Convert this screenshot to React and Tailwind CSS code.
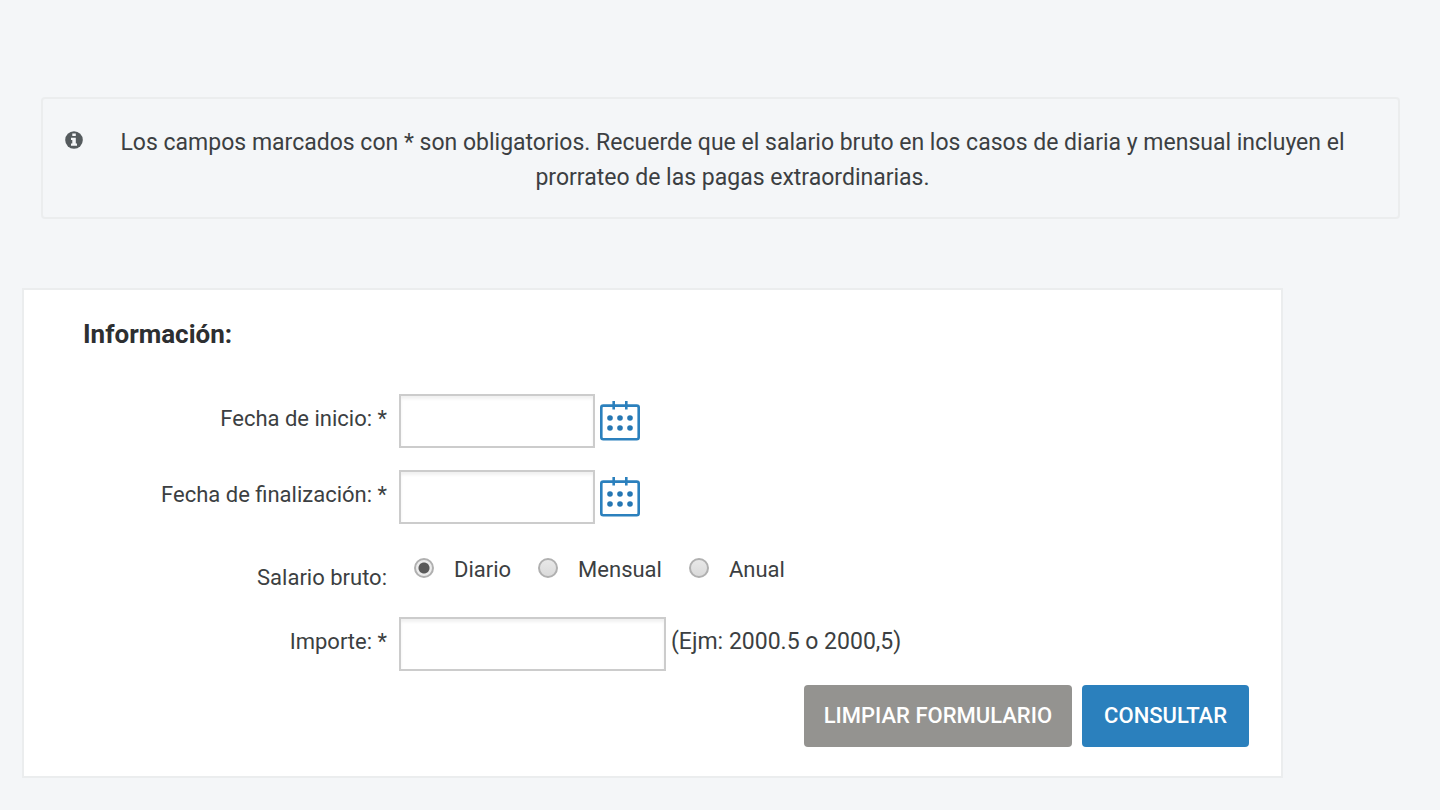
import React, { useState } from 'react';

const SALARY_TYPES = [
  { value: 'diario', label: 'Diario' },
  { value: 'mensual', label: 'Mensual' },
  { value: 'anual', label: 'Anual' },
];

const inputClass =
  'h-[54px] border-2 border-[#cccccc] bg-white px-3 shadow-[inset_0_3px_3px_rgba(0,0,0,0.06)] outline-none focus:border-[#2b80bd]';

function InfoIcon() {
  return (
    <svg className="mt-[6px] h-[18px] w-[18px] shrink-0" viewBox="0 0 18 18" aria-hidden="true">
      <circle cx="9" cy="9" r="8.8" fill="#555b5e" />
      <path d="M7.3 2.5h3.5v2.6H7.3zM6 6.8h4.8v5.7H12v2.2H6v-2.2h1.3V9H6z" fill="#f4f6f8" />
    </svg>
  );
}

function CalendarIcon() {
  return (
    <svg className="h-10 w-10" viewBox="0 0 40 40" fill="none" aria-hidden="true">
      <rect x="1.3" y="4.6" width="37.4" height="33.7" rx="2" stroke="#2b80bd" strokeWidth="2.6" />
      <path d="M13.7 0v8.5M26.3 0v8.5" stroke="#2b80bd" strokeWidth="2.6" />
      <g fill="#2577b3">
        <circle cx="10" cy="17" r="2.8" />
        <circle cx="20" cy="17" r="2.8" />
        <circle cx="30" cy="17" r="2.8" />
        <circle cx="10" cy="27" r="2.8" />
        <circle cx="20" cy="27" r="2.8" />
        <circle cx="30" cy="27" r="2.8" />
      </g>
    </svg>
  );
}

function DateField({ id, label, value, onChange }) {
  return (
    <div className="flex items-center gap-3">
      <label htmlFor={id} className="w-[363px] pb-1 text-right">
        {label}
      </label>
      <div className="flex items-center gap-[5px]">
        <input
          id={id}
          type="text"
          value={value}
          onChange={(e) => onChange(e.target.value)}
          className={`w-[196px] ${inputClass}`}
        />
        <button type="button" aria-label={`Abrir calendario, ${label}`} className="cursor-pointer">
          <CalendarIcon />
        </button>
      </div>
    </div>
  );
}

export default function App() {
  const [startDate, setStartDate] = useState('');
  const [endDate, setEndDate] = useState('');
  const [salaryType, setSalaryType] = useState('diario');
  const [amount, setAmount] = useState('');

  const handleReset = () => {
    setStartDate('');
    setEndDate('');
    setSalaryType('diario');
    setAmount('');
  };

  return (
    <div className="min-h-screen bg-[#f4f6f8] pt-[97px] pb-8 font-[Roboto,sans-serif] text-[22px] leading-8 text-[#3c3f42]">
      {/* Notice */}
      <div className="mr-10 ml-[41px] flex gap-6 rounded-sm border-2 border-[#ebedee] px-[22px] pt-[26px] pb-[22px]">
        <InfoIcon />
        <p className="flex-1 pr-[18px] text-center text-[23px] leading-[35px]">
          Los campos marcados con * son obligatorios. Recuerde que el salario bruto en los casos de
          diaria y mensual incluyen el prorrateo de las pagas extraordinarias.
        </p>
      </div>

      {/* Form */}
      <form
        onSubmit={(e) => e.preventDefault()}
        className="mt-[69px] mr-[157px] ml-[22px] border-2 border-[#ebedee] bg-white pt-7 pb-[29px]"
      >
        <h2 className="pl-[59px] text-[26px] leading-8 font-bold text-[#2d2f31]">Información:</h2>

        <div className="mt-11 flex flex-col gap-[22px]">
          <DateField
            id="fecha-inicio"
            label="Fecha de inicio: *"
            value={startDate}
            onChange={setStartDate}
          />
          <DateField
            id="fecha-fin"
            label="Fecha de finalización: *"
            value={endDate}
            onChange={setEndDate}
          />
        </div>

        <div
          role="radiogroup"
          aria-labelledby="salario-bruto"
          className="mt-[30px] flex items-start gap-3"
        >
          <span id="salario-bruto" className="w-[363px] pt-2 text-right">
            Salario bruto:
          </span>
          <div className="flex gap-[27px] pl-[15px]">
            {SALARY_TYPES.map(({ value, label }) => (
              <label key={value} className="flex items-center gap-5">
                <input
                  type="radio"
                  name="salario"
                  value={value}
                  checked={salaryType === value}
                  onChange={() => setSalaryType(value)}
                  className="mb-1 h-5 w-5 appearance-none rounded-full border-2 border-[#b0b0b0] bg-linear-to-b from-[#e8e8e8] to-[#dadada] checked:bg-[radial-gradient(circle,#5a5a5a_5px,#ececec_6px)]"
                />
                {label}
              </label>
            ))}
          </div>
        </div>

        <div className="mt-[23px] flex items-center gap-3">
          <label htmlFor="importe" className="w-[363px] pb-1 text-right">
            Importe: *
          </label>
          <div className="flex items-center gap-[5px]">
            <input
              id="importe"
              type="text"
              value={amount}
              onChange={(e) => setAmount(e.target.value)}
              className={`w-[267px] ${inputClass}`}
            />
            <span className="pb-1 text-[23px]">(Ejm: 2000.5 o 2000,5)</span>
          </div>
        </div>

        {/* Actions */}
        <div className="mt-[14px] flex justify-end gap-[10px] pr-8 font-medium text-white">
          <button
            type="button"
            onClick={handleReset}
            className="h-[62px] cursor-pointer rounded-sm bg-[#949390] px-5"
          >
            LIMPIAR FORMULARIO
          </button>
          <button type="submit" className="h-[62px] cursor-pointer rounded-sm bg-[#2b80bd] px-[22px]">
            CONSULTAR
          </button>
        </div>
      </form>
    </div>
  );
}
